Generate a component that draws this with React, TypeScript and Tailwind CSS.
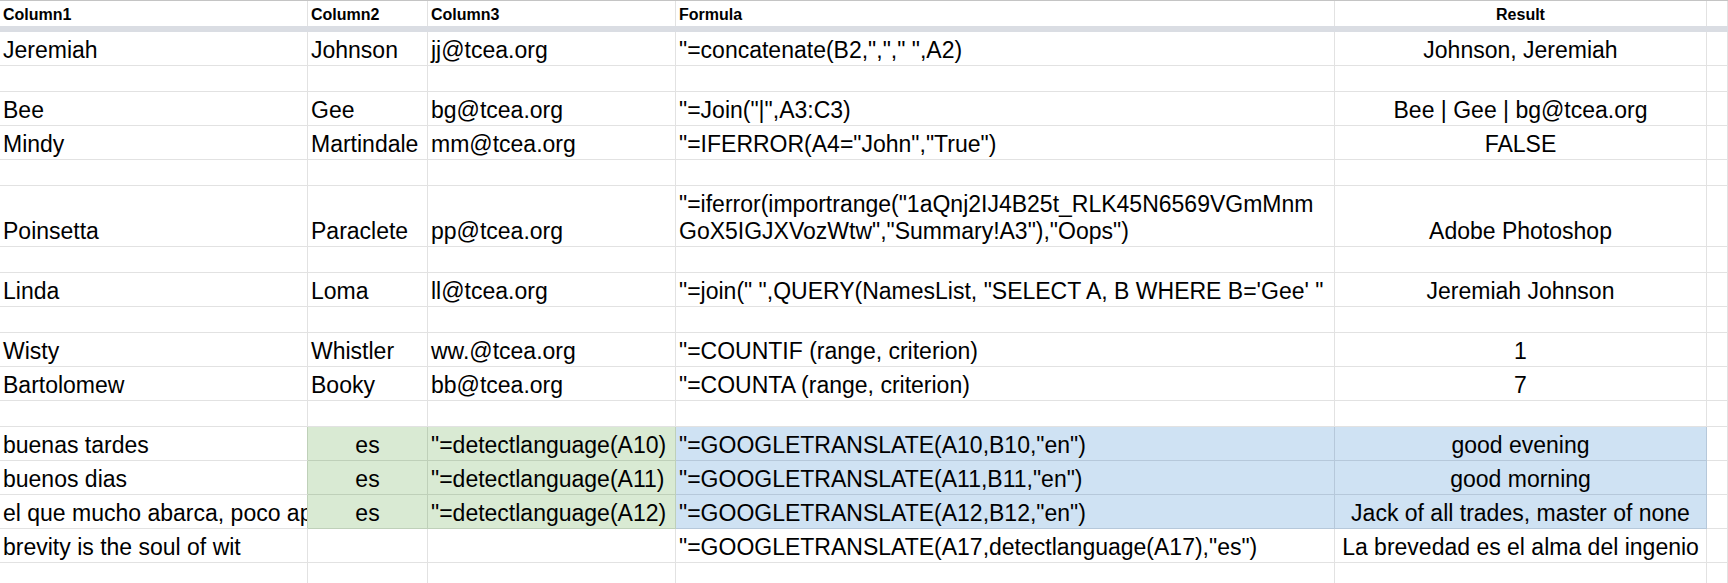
import type { ReactNode } from "react";

type Tone = "green" | "blue" | undefined;

interface Cell {
  text?: ReactNode;
  center?: boolean;
  tone?: Tone;
}

interface Row {
  height: string;
  cells: Cell[];
  edgeTone?: Tone;
}

const widths = ["w-[308px]", "w-[120px]", "w-[248px]", "w-[659px]", "w-[372px]", "flex-1"];

const headers = ["Column1", "Column2", "Column3", "Formula", "Result", ""];

const plain = (a: string, b: string, c: string, d: ReactNode, e: string): Cell[] => [
  { text: a },
  { text: b },
  { text: c },
  { text: d },
  { text: e, center: true },
  {},
];

const translated = (a: string, n: number, e: string): Cell[] => [
  { text: a },
  { text: "es", center: true, tone: "green" },
  { text: `"=detectlanguage(A${n})`, tone: "green" },
  { text: `"=GOOGLETRANSLATE(A${n},B${n},"en")`, tone: "blue" },
  { text: e, center: true, tone: "blue" },
  {},
];

const blank = (): Row => ({ height: "h-[26px]", cells: [{}, {}, {}, {}, {}, {}] });

const rows: Row[] = [
  { height: "h-[34px]", cells: plain("Jeremiah", "Johnson", "jj@tcea.org", '"=concatenate(B2,","," ",A2)', "Johnson, Jeremiah") },
  blank(),
  { height: "h-[34px]", cells: plain("Bee", "Gee", "bg@tcea.org", '"=Join("|",A3:C3)', "Bee | Gee | bg@tcea.org") },
  { height: "h-[34px]", cells: plain("Mindy", "Martindale", "mm@tcea.org", '"=IFERROR(A4="John","True")', "FALSE") },
  blank(),
  {
    height: "h-[61px]",
    cells: plain(
      "Poinsetta",
      "Paraclete",
      "pp@tcea.org",
      <span className="flex flex-col">
        <span>"=iferror(importrange("1aQnj2IJ4B25t_RLK45N6569VGmMnm</span>
        <span>GoX5IGJXVozWtw","Summary!A3"),"Oops")</span>
      </span>,
      "Adobe Photoshop"
    ),
  },
  blank(),
  {
    height: "h-[34px]",
    cells: plain("Linda", "Loma", "ll@tcea.org", `"=join(" ",QUERY(NamesList, "SELECT A, B WHERE B='Gee' "`, "Jeremiah Johnson"),
  },
  blank(),
  { height: "h-[34px]", cells: plain("Wisty", "Whistler", "ww.@tcea.org", '"=COUNTIF (range, criterion)', "1") },
  { height: "h-[34px]", cells: plain("Bartolomew", "Booky", "bb@tcea.org", '"=COUNTA (range, criterion)', "7") },
  blank(),
  { height: "h-[34px]", cells: translated("buenas tardes", 10, "good evening"), edgeTone: "green" },
  { height: "h-[34px]", cells: translated("buenos dias", 11, "good morning"), edgeTone: "green" },
  { height: "h-[34px]", cells: translated("el que mucho abarca, poco aprieta", 12, "Jack of all trades, master of none"), edgeTone: "green" },
  {
    height: "h-[34px]",
    cells: plain("brevity is the soul of wit", "", "", '"=GOOGLETRANSLATE(A17,detectlanguage(A17),"es")', "La brevedad es el alma del ingenio"),
  },
  blank(),
];

const toneClass = (tone: Tone) => {
  if (tone === "green") return "bg-[#d9ead3] border-[#bfd0b9]";
  if (tone === "blue") return "bg-[#cfe2f3] border-[#b6c8da]";
  return "bg-white border-[#e2e2e2]";
};

export default function App() {
  return (
    <div className="h-[583px] w-[1728px] overflow-hidden bg-white font-['Liberation_Sans',Arial,sans-serif] text-black">
      <div className="flex h-[26px] border-t border-[#c4c4c4]">
        {headers.map((label, i) => (
          <div
            key={i}
            className={`${widths[i]} flex shrink-0 items-end border-r border-[#e2e2e2] px-[3px] pb-[2px] text-[16px] leading-[18px] font-bold ${
              i === 4 ? "justify-center" : ""
            }`}
          >
            {label}
          </div>
        ))}
      </div>
      <div className="h-[6px] bg-[#dadde3]" />
      {rows.map((row, r) => (
        <div key={r} className={`flex ${row.height}`}>
          {row.cells.map((cell, i) => {
            const edge = i === 0 && row.edgeTone ? "border-r-[#bfd0b9]" : "";
            return (
              <div
                key={i}
                className={`${widths[i]} flex shrink-0 items-end overflow-hidden whitespace-nowrap border-r border-b px-[3px] pb-[1px] text-[23px] leading-[27px] ${toneClass(
                  cell.tone
                )} ${edge} ${cell.center ? "justify-center" : ""}`}
              >
                {cell.text}
              </div>
            );
          })}
        </div>
      ))}
    </div>
  );
}
